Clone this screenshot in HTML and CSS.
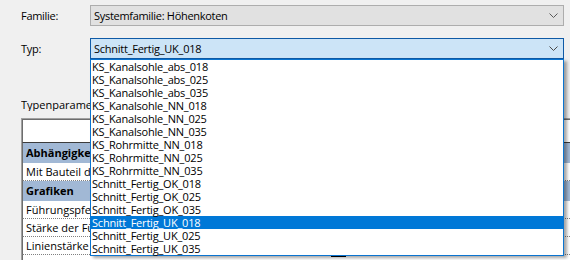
FILE: index.html
```html
<!DOCTYPE html>
<html lang="de">
<head>
<meta charset="utf-8">
<title>Typeneigenschaften</title>
<link rel="stylesheet" href="styles.css">
</head>
<body>
<div class="dialog">
  <div class="field-row">
    <div class="field-label">Familie:</div>
    <div class="combo combo-readonly">
      <span class="combo-text">Systemfamilie: Höhenkoten</span>
      <svg class="chevron" width="9" height="5" viewBox="0 0 9 5"><path d="M0.5 0.5 L4.5 4.5 L8.5 0.5" fill="none" stroke="#5a5a5a" stroke-width="1"/></svg>
    </div>
  </div>
  <div class="field-row field-row-typ">
    <div class="field-label">Typ:</div>
    <div class="combo-wrap">
      <div class="combo combo-open">
        <span class="combo-text combo-text-typ">Schnitt_Fertig_UK_018</span>
        <svg class="chevron" width="9" height="5" viewBox="0 0 9 5"><path d="M0.5 0.5 L4.5 4.5 L8.5 0.5" fill="none" stroke="#4a4a4a" stroke-width="1"/></svg>
      </div>
      <ul class="dropdown">
        <li>KS_Kanalsohle_abs_018</li>
        <li>KS_Kanalsohle_abs_025</li>
        <li>KS_Kanalsohle_abs_035</li>
        <li>KS_Kanalsohle_NN_018</li>
        <li>KS_Kanalsohle_NN_025</li>
        <li>KS_Kanalsohle_NN_035</li>
        <li>KS_Rohrmitte_NN_018</li>
        <li>KS_Rohrmitte_NN_025</li>
        <li>KS_Rohrmitte_NN_035</li>
        <li>Schnitt_Fertig_OK_018</li>
        <li>Schnitt_Fertig_OK_025</li>
        <li>Schnitt_Fertig_OK_035</li>
        <li class="selected">Schnitt_Fertig_UK_018</li>
        <li>Schnitt_Fertig_UK_025</li>
        <li>Schnitt_Fertig_UK_035</li>
      </ul>
    </div>
  </div>
  <div class="section-label"><span class="clip clip-label">Typenparameter</span></div>
  <div class="param-table">
    <div class="param-head"><div class="col-name"></div><div class="col-value"></div></div>
    <div class="param-group"><span class="clip">Abhängigkeiten</span></div>
    <div class="param-row"><div class="col-name">Mit Bauteil drehen</div><div class="col-value"></div></div>
    <div class="param-group"><span class="clip">Grafiken</span></div>
    <div class="param-row"><div class="col-name">Führungspfeil</div><div class="col-value"></div></div>
    <div class="param-row"><div class="col-name">Stärke der Führungslinie</div><div class="col-value"></div></div>
    <div class="param-row"><div class="col-name">Linienstärke Führungspfeil</div><div class="col-value"></div></div>
    <div class="param-row"><div class="col-name"></div><div class="col-value"><span class="mark"></span></div></div>
  </div>
</div>
</body>
</html>
```
FILE: styles.css
```css
html, body {
  margin: 0;
  padding: 0;
}
body {
  width: 570px;
  height: 260px;
  overflow: hidden;
  background: #f0f0f0;
  font-family: "Open Sans", "Noto Sans", sans-serif;
  font-size: 11px;
  letter-spacing: -0.3px;
  color: #000;
}
.dialog {
  padding-top: 5px;
}
.field-row {
  display: flex;
  align-items: center;
}
.field-row-typ {
  margin-top: 12px;
}
.field-label {
  width: 69px;
  padding-left: 21px;
  line-height: 13px;
}
.combo-wrap {
  position: relative;
  width: 474px;
}
.combo {
  box-sizing: border-box;
  width: 474px;
  height: 21px;
  display: flex;
  align-items: center;
  justify-content: space-between;
  padding: 0 5px 0 3px;
  border: 1px solid #adadad;
  background: #e1e1e1;
}
.combo-open {
  border-color: #0f5aa6;
  background: #cce4f7;
}
.combo-text {
  line-height: 13px;
}
.combo-text-typ {
  letter-spacing: -0.25px;
}
.chevron {
  display: block;
}
.dropdown {
  position: absolute;
  left: 0;
  top: 100%;
  z-index: 5;
  box-sizing: border-box;
  width: 474px;
  margin: 0;
  padding: 0;
  list-style: none;
  background: #fff;
  border: 1px solid #0a74d0;
  box-shadow: 3px 2px 3px rgba(0, 0, 0, 0.35);
}
.dropdown li {
  height: 13px;
  line-height: 13px;
  padding-left: 1px;
  letter-spacing: -0.2px;
  white-space: nowrap;
}
.dropdown li.selected {
  background: #0078d7;
  color: #fff;
}
.section-label {
  margin-top: 39px;
  padding-left: 21px;
  line-height: 13px;
  letter-spacing: 0;
}
.clip {
  display: block;
  width: 64px;
  overflow: hidden;
  white-space: nowrap;
}
.clip-label {
  width: 69px;
}
.param-table {
  margin-top: 7px;
  margin-left: 21px;
  width: 600px;
  border-top: 1px solid #a0a0a0;
  border-left: 1px solid #a0a0a0;
  letter-spacing: 0;
}
.param-head {
  display: flex;
  height: 22px;
  background: #fff;
  border-top: 1px solid #6d6d6d;
  border-left: 1px solid #6d6d6d;
  border-bottom: 1px solid #3c3c3c;
}
.param-group {
  height: 20px;
  line-height: 20px;
  padding-left: 3px;
  background: #a1b8d5;
  font-weight: bold;
  border-left: 1px solid #6d6d6d;
}
.param-row {
  display: flex;
  height: 17px;
  line-height: 17px;
  background: #fff;
  border-left: 1px solid #6d6d6d;
  border-bottom: 1px dotted #808080;
}
.col-name {
  width: 64px;
  padding-left: 3px;
  white-space: nowrap;
  overflow: hidden;
}
.col-value {
  flex: 1;
  padding-left: 241px;
}
.mark {
  display: inline-block;
  width: 15px;
  height: 2px;
  background: #000;
  vertical-align: top;
}
```
